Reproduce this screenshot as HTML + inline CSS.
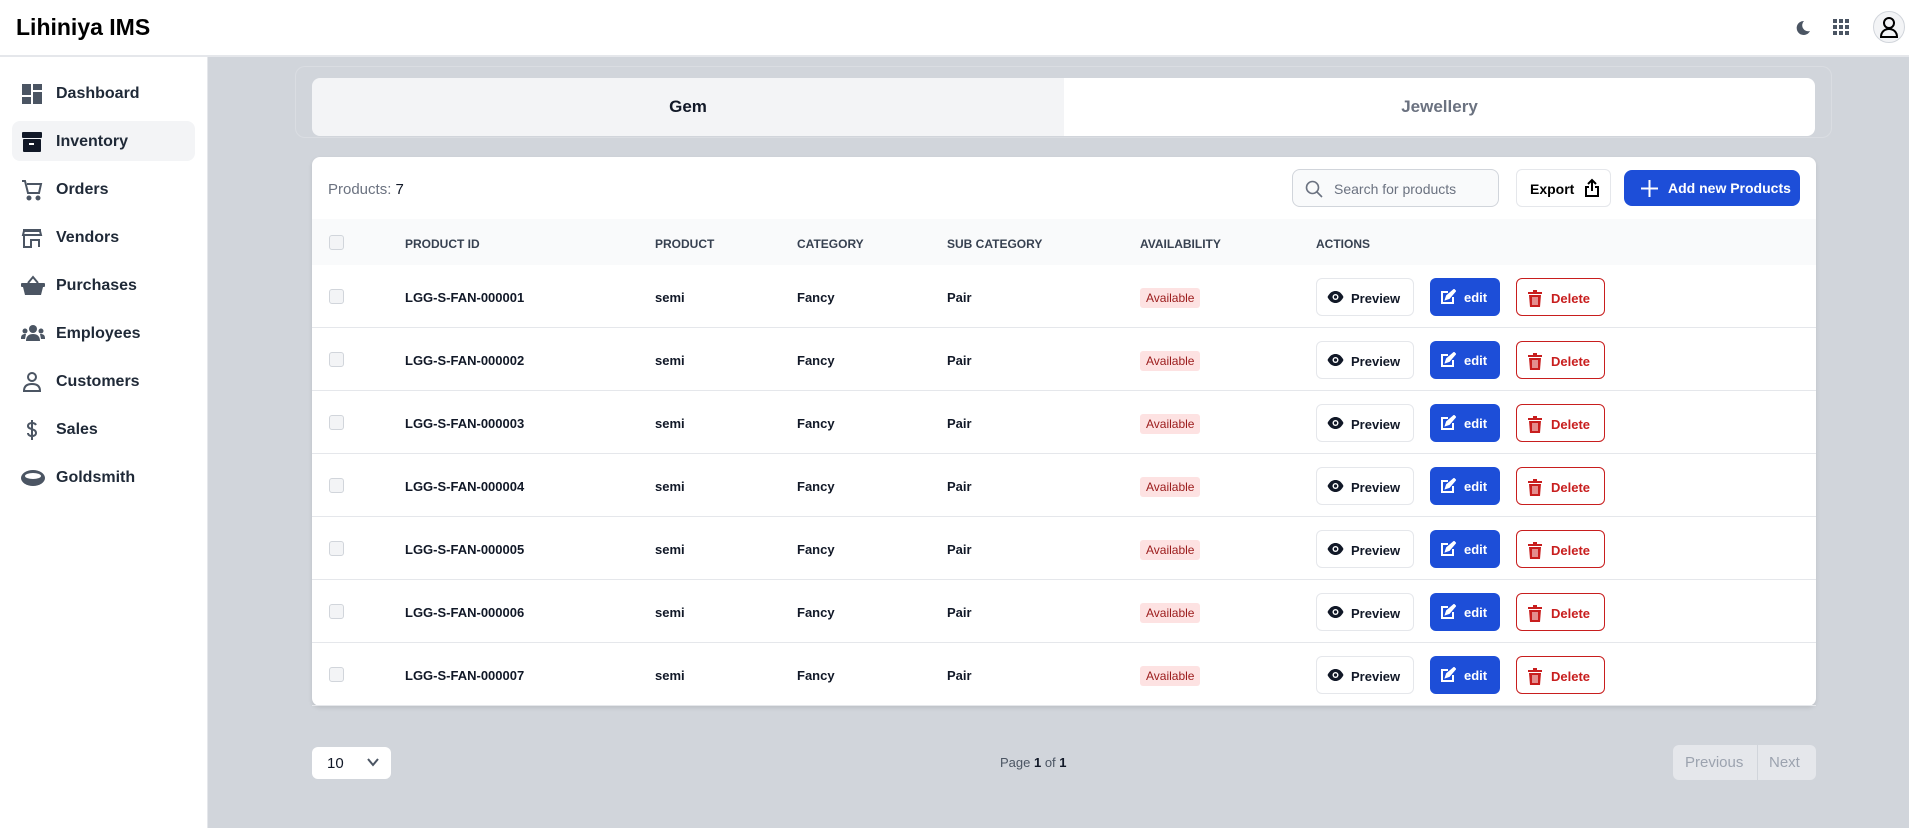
<!DOCTYPE html>
<html><head><meta charset="utf-8"><style>
*{box-sizing:border-box;margin:0;padding:0}
body{width:1909px;height:828px;overflow:hidden;font-family:"Liberation Sans",sans-serif;background:#d1d5db;position:relative;color:#111827}
.top{position:absolute;left:0;top:0;width:1909px;height:57px;background:#fff;border-bottom:2px solid #e5e7eb}
.title{position:absolute;left:16px;top:14px;font-size:23px;font-weight:bold;color:#000}
.side{position:absolute;left:0;top:57px;width:208px;height:771px;background:#fff;border-right:1px solid #e5e7eb}
.nav{position:absolute;left:12px;width:183px;height:40px;border-radius:8px;font-size:16px;font-weight:bold;color:#1f2937}
.nav span{position:absolute;left:44px;top:12px}
.nav svg{position:absolute;left:9px;top:10px}
.act{background:#f3f4f6}
.tabs{position:absolute;left:295px;top:66px;width:1537px;height:72px;border-radius:10px;background:#d1d5db;box-shadow:0 0 0 1px #dadde2 inset}
.tab{position:absolute;top:78px;height:58px;font-size:17px;font-weight:bold;text-align:center;line-height:58px}
.card{position:absolute;left:312px;top:157px;width:1504px;height:549px;background:#fff;border-radius:8px;box-shadow:0 2px 4px rgba(0,0,0,.1)}
.hdr{position:absolute;left:0;top:62px;width:1504px;height:46px;background:#f9fafb}
.th{position:absolute;font-size:12px;font-weight:bold;color:#374151;top:80px}
.row{position:absolute;left:0;width:1504px;height:63px;border-bottom:1px solid #e5e7eb}
.cb{position:absolute;left:17px;width:15px;height:15px;border:1px solid #d1d5db;border-radius:3px;background:#f3f4f6}
.td{position:absolute;font-size:13px;font-weight:bold;color:#111827;top:25px}
.badge{position:absolute;left:828px;top:23px;background:#fde2e2;color:#9b1c1c;font-size:12px;padding:3px 6px;border-radius:3px}
.btn{position:absolute;top:13px;height:38px;border-radius:6px;font-size:13px;font-weight:bold}
.pv{left:1004px;width:98px;border:1px solid #e5e7eb;background:#fff;color:#111827}
.ed{left:1118px;width:70px;background:#1d4ed8;color:#fff}
.dl{left:1204px;width:89px;border:1px solid #c81e1e;color:#c81e1e;background:#fff}
.btn svg{position:absolute;top:11px}
.btn span{position:absolute;top:12px}
</style></head><body>
<div class="top"><div class="title">Lihiniya IMS</div>
<svg style="position:absolute;left:1795px;top:20px" width="16" height="16" viewBox="0 0 16 16"><path d="M9 1a7 7 0 1 0 6 10A6 6 0 0 1 9 1z" fill="#4b5563"/></svg>
<svg style="position:absolute;left:1833px;top:19px" width="16" height="16" viewBox="0 0 16 16" fill="#4b5563"><rect x="0" y="0" width="4" height="4"/><rect x="6" y="0" width="4" height="4"/><rect x="12" y="0" width="4" height="4"/><rect x="0" y="6" width="4" height="4"/><rect x="6" y="6" width="4" height="4"/><rect x="12" y="6" width="4" height="4"/><rect x="0" y="12" width="4" height="4"/><rect x="6" y="12" width="4" height="4"/><rect x="12" y="12" width="4" height="4"/></svg>
<div style="position:absolute;left:1873px;top:11px;width:32px;height:32px;border-radius:50%;border:1px solid #d1d5db;background:#f3f4f6"></div>
<svg style="position:absolute;left:1879px;top:16px" width="20" height="22" viewBox="0 0 20 22" fill="none" stroke="#000" stroke-width="2"><circle cx="10" cy="7" r="5"/><path d="M2 21c0-5 3.5-8 8-8s8 3 8 8z"/></svg>
</div>
<div class="side">
<div class="nav" style="top:16px"><svg width="22" height="22" viewBox="0 0 22 22" fill="#4b5563"><rect x="1" y="1" width="9" height="11"/><rect x="12" y="1" width="9" height="6"/><rect x="1" y="14" width="9" height="7"/><rect x="12" y="9" width="9" height="12"/></svg><span>Dashboard</span></div>
<div class="nav act" style="top:64px"><svg width="22" height="22" viewBox="0 0 22 22"><rect x="1" y="1" width="20" height="6" rx="1" fill="#111827"/><rect x="2" y="8" width="18" height="13" rx="1" fill="#111827"/><rect x="8" y="12" width="5" height="2" fill="#fff"/></svg><span>Inventory</span></div>
<div class="nav" style="top:112px"><svg width="22" height="22" viewBox="0 0 22 22" fill="none" stroke="#4b5563" stroke-width="2"><path d="M1 2h3l3 12h11l2-9H6"/><circle cx="8" cy="19" r="1.5" fill="#4b5563"/><circle cx="17" cy="19" r="1.5" fill="#4b5563"/></svg><span>Orders</span></div>
<div class="nav" style="top:160px"><svg width="22" height="22" viewBox="0 0 22 22" fill="none" stroke="#4b5563" stroke-width="2"><path d="M2 3h18M2 8h18l-1-4H3zM3 9v11h7v-7h8v7"/></svg><span>Vendors</span></div>
<div class="nav" style="top:208px"><svg width="24" height="22" viewBox="0 0 24 22" fill="#4b5563"><path d="M7 8l5-6 5 6" stroke="#4b5563" stroke-width="2" fill="none"/><rect x="0" y="8" width="24" height="4" rx="1"/><path d="M2 12h20l-2 8H4z"/></svg><span>Purchases</span></div>
<div class="nav" style="top:256px"><svg width="24" height="22" viewBox="0 0 24 22" fill="#4b5563"><circle cx="12" cy="6" r="4"/><circle cx="4" cy="8" r="2.5"/><circle cx="20" cy="8" r="2.5"/><path d="M5 18c0-5 3-7 7-7s7 2 7 7z"/><path d="M0 15c0-3 2-4 4-4l1 0-1 5H0zM24 15c0-3-2-4-4-4h-1l1 5h4z"/></svg><span>Employees</span></div>
<div class="nav" style="top:304px"><svg width="22" height="22" viewBox="0 0 22 22" fill="none" stroke="#4b5563" stroke-width="2"><circle cx="11" cy="6" r="4"/><path d="M3 20c0-5 3-7 8-7s8 2 8 7z"/></svg><span>Customers</span></div>
<div class="nav" style="top:352px"><svg width="22" height="22" viewBox="0 0 22 22" fill="none" stroke="#4b5563" stroke-width="2"><path d="M15 6c-1-2-3-2-4-2-2 0-4 1-4 3 0 4 8 2 8 7 0 2-2 3-4 3s-4-1-4-3M11 1v20"/></svg><span>Sales</span></div>
<div class="nav" style="top:400px"><svg width="24" height="22" viewBox="0 0 24 22"><ellipse cx="12" cy="11" rx="12" ry="8" fill="#4b5563"/><ellipse cx="12" cy="9" rx="8" ry="3" fill="#fff"/></svg><span>Goldsmith</span></div>
</div>
<div class="tabs"></div>
<div class="tab" style="left:312px;width:752px;background:#f3f4f6;border-radius:8px 0 0 8px;color:#111827">Gem</div>
<div class="tab" style="left:1064px;width:751px;background:#fff;border-radius:0 8px 8px 0;color:#6b7280">Jewellery</div>
<div class="card">
<div style="position:absolute;left:16px;top:24px;font-size:15px;color:#6b7280">Products: <span style="color:#111827">7</span></div>
<div style="position:absolute;left:980px;top:12px;width:207px;height:38px;border:1px solid #d1d5db;border-radius:8px;background:#f9fafb"><svg style="position:absolute;left:12px;top:10px" width="18" height="18" viewBox="0 0 18 18" fill="none" stroke="#6b7280" stroke-width="1.6"><circle cx="7.5" cy="7.5" r="6"/><path d="M12 12l5 5"/></svg><span style="position:absolute;left:41px;top:11px;font-size:14px;color:#6b7280">Search for products</span></div>
<div style="position:absolute;left:1204px;top:12px;width:95px;height:38px;border:1px solid #e5e7eb;border-radius:6px"><span style="position:absolute;left:13px;top:11px;font-size:14px;font-weight:bold;color:#000">Export</span><svg style="position:absolute;left:67px;top:8px" width="16" height="20" viewBox="0 0 16 20" fill="none" stroke="#000" stroke-width="2"><path d="M8 13V2M4 6l4-4 4 4M5 9H2v9h12V9h-3"/></svg></div>
<div style="position:absolute;left:1312px;top:13px;width:176px;height:36px;background:#1d4ed8;border-radius:8px"><svg style="position:absolute;left:17px;top:10px" width="17" height="17" viewBox="0 0 17 17" stroke="#fff" stroke-width="2"><path d="M8.5 0v17M0 8.5h17"/></svg><span style="position:absolute;left:44px;top:10px;font-size:14px;font-weight:bold;color:#fff">Add new Products</span></div>
<div class="hdr"><div class="cb" style="top:16px"></div></div>
<div class="th" style="left:93px">PRODUCT ID</div><div class="th" style="left:343px">PRODUCT</div><div class="th" style="left:485px">CATEGORY</div><div class="th" style="left:635px">SUB CATEGORY</div><div class="th" style="left:828px">AVAILABILITY</div><div class="th" style="left:1004px">ACTIONS</div>
<div id="rows"></div>
</div>
<div style="position:absolute;left:312px;top:747px;width:79px;height:32px;background:#fff;border-radius:6px"><span style="position:absolute;left:15px;top:8px;font-size:15px">10</span><svg style="position:absolute;left:55px;top:11px" width="12" height="9" viewBox="0 0 12 9" fill="none" stroke="#4b5563" stroke-width="2"><path d="M1 1l5 6 5-6"/></svg></div>
<div style="position:absolute;left:1000px;top:755px;font-size:13px;color:#4b5563">Page <b style="color:#111827">1</b> of <b style="color:#111827">1</b></div>
<div style="position:absolute;left:1673px;top:745px;width:143px;height:35px;background:#e5e7eb;border-radius:6px;font-size:15px;color:#9ca3af"><span style="position:absolute;left:12px;top:9px">Previous</span><div style="position:absolute;left:84px;top:0;width:1px;height:35px;background:#d1d5db"></div><span style="position:absolute;left:96px;top:9px">Next</span></div>
<script>
var h='';for(var i=1;i<=7;i++){h+='<div class="row" style="top:'+(108+(i-1)*63)+'px"><div class="cb" style="top:24px"></div><div class="td" style="left:93px">LGG-S-FAN-00000'+i+'</div><div class="td" style="left:343px">semi</div><div class="td" style="left:485px">Fancy</div><div class="td" style="left:635px">Pair</div><div class="badge">Available</div>'+
'<div class="btn pv"><svg style="left:10px" width="17" height="14" viewBox="0 0 17 14"><path d="M0.5 7C3 2 6 1 8.5 1S14 2 16.5 7C14 12 11 13 8.5 13S3 12 0.5 7z" fill="#111827"/><circle cx="8.5" cy="7" r="3" fill="#fff"/><circle cx="8.5" cy="7" r="1.6" fill="#111827"/></svg><span style="left:34px">Preview</span></div>'+
'<div class="btn ed"><svg style="left:10px" width="16" height="16" viewBox="0 0 16 16" fill="none" stroke="#fff" stroke-width="2"><path d="M8 3H2v11h11V8"/><path d="M6 10l1-3 7-6 1 1-6 7z" fill="#fff"/></svg><span style="left:34px">edit</span></div>'+
'<div class="btn dl"><svg style="left:11px" width="14" height="17" viewBox="0 0 14 17" fill="#c81e1e"><rect x="0" y="2" width="14" height="2"/><rect x="5" y="0" width="4" height="2"/><path d="M1 5h12l-1 12H2z"/><path d="M5 7v8M7 7v8M9 7v8" stroke="#fff" stroke-width="1"/></svg><span style="left:34px">Delete</span></div></div>';}
document.getElementById('rows').innerHTML=h;
</script>
</body></html>
